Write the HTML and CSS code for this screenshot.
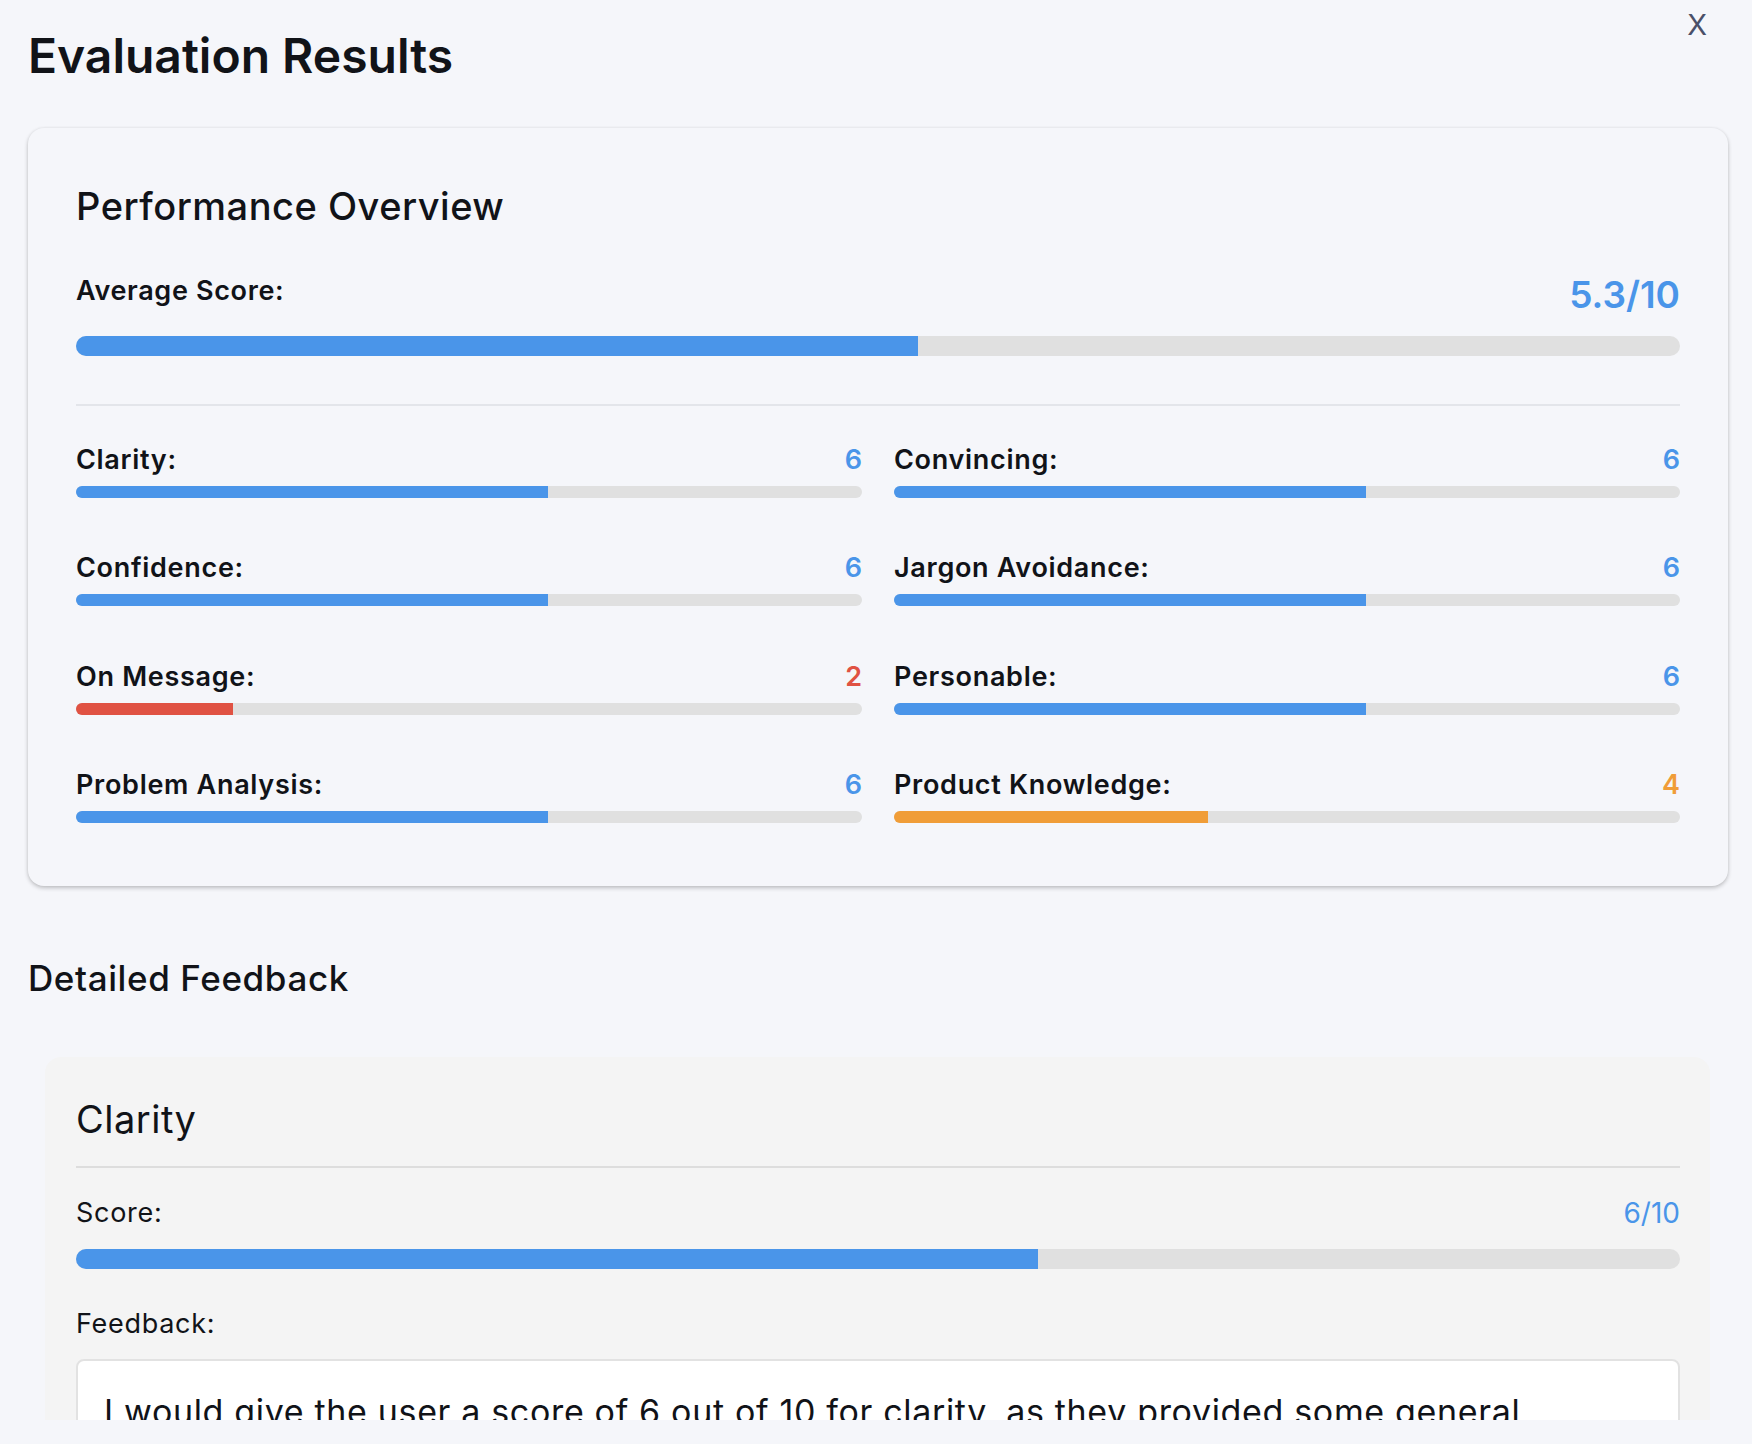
FILE: index.html
```html
<!DOCTYPE html>
<html lang="en">
<head>
<meta charset="utf-8">
<title>Evaluation Results</title>
<link rel="stylesheet" href="styles.css">
</head>
<body>
<div class="modal">
  <button class="close" type="button">X</button>
  <h1 class="title">Evaluation Results</h1>

  <section class="overview">
    <h2 class="overview-title">Performance Overview</h2>
    <div class="avg-row">
      <span class="avg-label">Average Score:</span>
      <span class="avg-value">5.3/10</span>
    </div>
    <div class="bar bar-lg"><div class="fill blue" style="width:52.5%"></div></div>
    <hr class="divider">
    <div class="grid">
      <div class="metric">
        <div class="metric-head"><span class="metric-label">Clarity:</span><span class="metric-value blue-text">6</span></div>
        <div class="bar bar-sm"><div class="fill blue" style="width:60%"></div></div>
      </div>
      <div class="metric">
        <div class="metric-head"><span class="metric-label">Convincing:</span><span class="metric-value blue-text">6</span></div>
        <div class="bar bar-sm"><div class="fill blue" style="width:60%"></div></div>
      </div>
      <div class="metric">
        <div class="metric-head"><span class="metric-label">Confidence:</span><span class="metric-value blue-text">6</span></div>
        <div class="bar bar-sm"><div class="fill blue" style="width:60%"></div></div>
      </div>
      <div class="metric">
        <div class="metric-head"><span class="metric-label">Jargon Avoidance:</span><span class="metric-value blue-text">6</span></div>
        <div class="bar bar-sm"><div class="fill blue" style="width:60%"></div></div>
      </div>
      <div class="metric">
        <div class="metric-head"><span class="metric-label">On Message:</span><span class="metric-value red-text">2</span></div>
        <div class="bar bar-sm"><div class="fill red" style="width:20%"></div></div>
      </div>
      <div class="metric">
        <div class="metric-head"><span class="metric-label">Personable:</span><span class="metric-value blue-text">6</span></div>
        <div class="bar bar-sm"><div class="fill blue" style="width:60%"></div></div>
      </div>
      <div class="metric">
        <div class="metric-head"><span class="metric-label">Problem Analysis:</span><span class="metric-value blue-text">6</span></div>
        <div class="bar bar-sm"><div class="fill blue" style="width:60%"></div></div>
      </div>
      <div class="metric">
        <div class="metric-head"><span class="metric-label">Product Knowledge:</span><span class="metric-value orange-text">4</span></div>
        <div class="bar bar-sm"><div class="fill orange" style="width:40%"></div></div>
      </div>
    </div>
  </section>

  <h2 class="section-title">Detailed Feedback</h2>

  <section class="feedback-card">
    <h3 class="fb-title">Clarity</h3>
    <hr class="fb-divider">
    <div class="fb-score-row">
      <span class="fb-label">Score:</span>
      <span class="fb-score">6/10</span>
    </div>
    <div class="bar bar-lg"><div class="fill blue" style="width:60%"></div></div>
    <div class="fb-label fb-label-feedback">Feedback:</div>
    <div class="fb-box">
      <p class="fb-text">I would give the user a score of 6 out of 10 for clarity, as they provided some general information about the product, but their explanation lacked specific details and structure that would help the customer clearly understand the benefits.</p>
    </div>
  </section>
</div>
</body>
</html>
```

FILE: styles.css
```css
* {
  box-sizing: border-box;
}

html, body {
  margin: 0;
  padding: 0;
  background: #f5f6fa;
}

body {
  font-family: Inter, "Noto Sans", "Liberation Sans", sans-serif;
  color: #111318;
  line-height: normal;
}

.modal {
  position: relative;
  height: 1420px;
  overflow: hidden;
  padding: 0 24px 0 28px;
}

.close {
  position: absolute;
  top: 7px;
  right: 45px;
  background: none;
  border: 0;
  padding: 0;
  margin: 0;
  font-family: Inter, "Noto Sans", sans-serif;
  font-size: 29px;
  font-weight: 400;
  line-height: normal;
  color: #4a5068;
  cursor: pointer;
}

.title {
  margin: 26px 0 0 0;
  font-size: 48px;
  font-weight: 600;
  line-height: normal;
}

.overview {
  margin-top: 43px;
  background: #f5f6fa;
  border-radius: 16px;
  box-shadow: 0 2px 4px rgba(0, 0, 0, 0.22), 0 0 3px rgba(0, 0, 0, 0.06);
  padding: 48px 48px 63px 48px;
}

.overview-title {
  margin: 7px 0 0 0;
  font-size: 38px;
  font-weight: 500;
  line-height: normal;
  letter-spacing: 0.5px;
}

.avg-row {
  display: flex;
  justify-content: space-between;
  align-items: flex-start;
  margin-top: 43px;
}

.avg-label {
  font-size: 27px;
  font-weight: 600;
  padding-top: 2px;
  letter-spacing: 0.65px;
}

.avg-value {
  font-size: 37px;
  font-weight: 600;
  color: #4a95e9;
}

.bar {
  background: #e0e0e0;
  overflow: hidden;
}

.bar-lg {
  height: 20px;
  border-radius: 10px;
}

.bar-sm {
  height: 12px;
  border-radius: 6px;
}

.fill {
  height: 100%;
}

.blue { background: #4a95e9; }
.red { background: #e05243; }
.orange { background: #f09d38; }

.blue-text { color: #4a95e9; }
.red-text { color: #e05243; }
.orange-text { color: #f09d38; }

.avg-row + .bar {
  margin-top: 19px;
}

.divider {
  border: 0;
  border-top: 2px solid #e3e5ea;
  margin: 48px 0 0 0;
  height: 0;
}

.grid {
  display: grid;
  grid-template-columns: 1fr 1fr;
  column-gap: 32px;
  row-gap: 53.3px;
  margin-top: 37px;
}

.metric-head {
  display: flex;
  justify-content: space-between;
  align-items: flex-start;
  margin-bottom: 10px;
}

.metric-label,
.metric-value {
  font-size: 27px;
  font-weight: 600;
}

.metric-label {
  letter-spacing: 0.7px;
}

.section-title {
  margin: 71px 0 0 0;
  font-size: 35px;
  font-weight: 500;
  line-height: normal;
  letter-spacing: 0.6px;
}

.feedback-card {
  margin: 58px 18px 0 17px;
  background: #f4f4f4;
  border-radius: 16px;
  padding: 39px 30px 40px 31px;
}

.fb-title {
  margin: 0;
  font-size: 38px;
  font-weight: 400;
  line-height: normal;
  letter-spacing: 0.5px;
}

.fb-divider {
  border: 0;
  border-top: 2px solid #dddddd;
  margin: 24px 0 0 0;
  height: 0;
}

.fb-score-row {
  display: flex;
  justify-content: space-between;
  align-items: flex-start;
  margin-top: 28px;
}

.fb-label {
  font-size: 27px;
  font-weight: 400;
  letter-spacing: 0.7px;
}

.fb-score {
  font-size: 28px;
  font-weight: 400;
  color: #4a95e9;
}

.fb-score-row + .bar {
  margin-top: 19px;
}

.fb-label-feedback {
  margin-top: 38px;
}

.fb-box {
  margin-top: 19px;
  background: #ffffff;
  border: 2px solid #e2e2e2;
  border-radius: 8px;
  padding: 25px 26px 24px 26px;
}

.fb-text {
  margin: 0;
  font-size: 34px;
  line-height: 1.5;
  letter-spacing: 0.66px;
}
```
